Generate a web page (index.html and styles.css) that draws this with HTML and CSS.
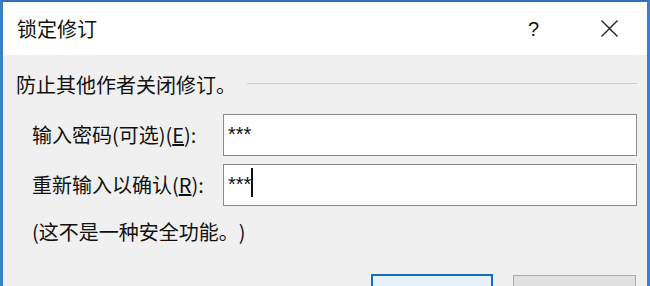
FILE: index.html
```html
<!DOCTYPE html>
<html lang="zh-CN">
<head>
    <meta charset="UTF-8">
    <title>锁定修订</title>
    <link rel="stylesheet" href="styles.css">
</head>
<body>
    <div class="dialog">
        <div class="titlebar">
            <span class="title">锁定修订</span>
            <span class="help">?</span>
            <svg class="close" viewBox="0 0 17 17" width="17" height="17">
                <path d="M0.5 0.5 L16.5 16.5 M16.5 0.5 L0.5 16.5" stroke="#222" stroke-width="1.4" fill="none"/>
            </svg>
        </div>

        <div class="content">
            <div class="intro">
                <span>防止其他作者关闭修订。</span>
                <span class="rule"></span>
            </div>

            <div class="fields">
                <label>输入密码(可选)(<u>E</u>):</label>
                <div class="field"><span class="mask">***</span></div>
                <label>重新输入以确认(<u>R</u>):</label>
                <div class="field"><span class="mask">***</span><span class="caret"></span></div>
            </div>

            <p class="note">(这不是一种安全功能。)</p>

            <div class="actions">
                <button class="btn primary">确定</button>
                <button class="btn">取消</button>
            </div>
        </div>
    </div>
</body>
</html>
```

FILE: styles.css
```css
html, body {
    margin: 0;
    padding: 0;
    width: 650px;
    height: 286px;
    overflow: hidden;
}

.dialog {
    box-sizing: border-box;
    height: 286px;
    border-left: 3px solid #3a80c3;
    border-right: 3px solid #3a80c3;
    border-top: 2px solid #2f73b6;
    background: #f0f0f0;
    overflow: hidden;
    font-family: "Noto Sans CJK SC", "Liberation Sans", sans-serif;
    color: #111;
    text-spacing-trim: space-all;
}

.titlebar {
    height: 53px;
    background: #fff;
    display: flex;
    align-items: center;
    padding-left: 14px;
}

.title {
    flex: 1;
    font-size: 20px;
    line-height: 20px;
}

.help {
    font-family: "Liberation Sans", sans-serif;
    font-size: 20px;
    line-height: 20px;
    margin-right: 62px;
}

.close {
    margin-right: 29px;
}

.content {
    padding: 0 10px 0 13px;
}

.intro {
    display: flex;
    align-items: center;
    margin-top: 20px;
    height: 20px;
    font-size: 20px;
    line-height: 20px;
}

.rule {
    flex: 1;
    height: 1px;
    background: #cfcfcf;
    margin-left: 11px;
    margin-bottom: 4px;
}

.fields {
    display: grid;
    grid-template-columns: 191px 1fr;
    row-gap: 8px;
    margin: 19px 0 0 16px;
}

.fields label {
    align-self: center;
    font-size: 20px;
    line-height: 20px;
}

.field {
    box-sizing: border-box;
    height: 42px;
    border: 1px solid #8c8c8c;
    background: #fff;
    display: flex;
    align-items: flex-start;
    padding-left: 4px;
}

.mask {
    font-family: "Liberation Sans", sans-serif;
    font-size: 20px;
    line-height: 20px;
    margin-top: 9px;
}

.caret {
    width: 2px;
    height: 29px;
    background: #111;
    margin-top: 3px;
}

.note {
    margin: 16px 0 0 16px;
    font-size: 20px;
    line-height: 20px;
}

.actions {
    display: flex;
    justify-content: flex-end;
    align-items: flex-start;
    gap: 20px;
    margin: 32px 1px 0 0;
}

.btn {
    box-sizing: border-box;
    width: 123px;
    height: 34px;
    padding: 10px 0 0;
    font-family: "Noto Sans CJK SC", sans-serif;
    font-size: 20px;
    line-height: 20px;
    color: #111;
    border: 1px solid #adadad;
    background: #e1e1e1;
    margin-top: 1px;
}

.btn.primary {
    width: 122px;
    border: 2px solid #1a6cb8;
    background: #e5f1fb;
    margin-top: 0;
}
```
